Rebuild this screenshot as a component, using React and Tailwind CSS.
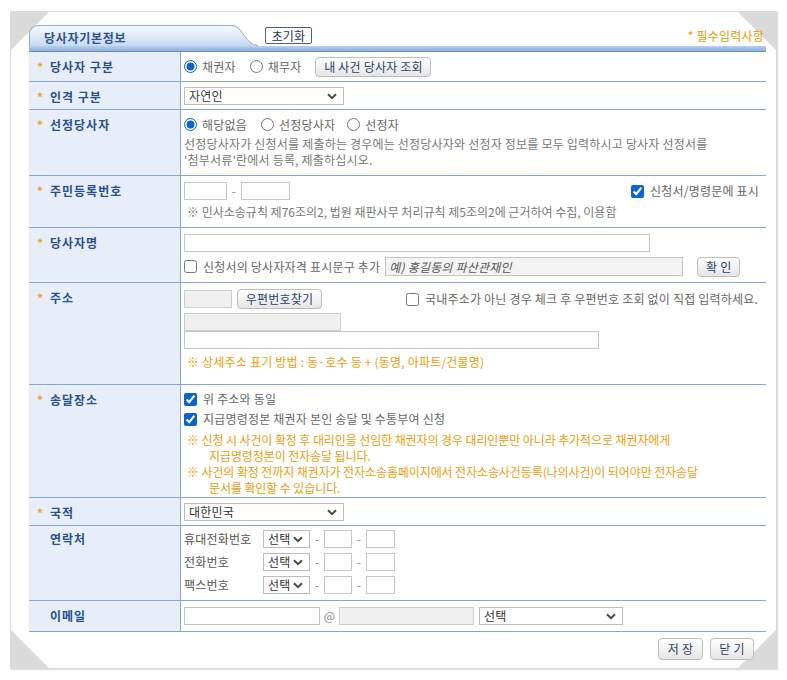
import React from 'react';

const radio = 'm-0 w-[13px] h-[13px] accent-[#0b63d1] shrink-0';
const check = 'm-0 w-[13px] h-[13px] accent-[#0b63d1] shrink-0';
const btn =
  'rounded-[4px] border border-[#bdbdbd] bg-linear-to-b from-white to-[#e6e6e6] text-[12px] text-[#1f3f6f] leading-none shrink-0';
const input = 'block h-[18px] border border-[#c6c6c6] bg-white shrink-0';
const grayInput = 'block h-[18px] border border-[#cccccc] bg-[#f0f0f0] shrink-0';
const note = 'leading-[16px] text-[#ee9c0c] whitespace-nowrap';

const Chevron = () => (
  <svg width="10" height="7" viewBox="0 0 10 7">
    <path d="M1 1.2 L5 5.2 L9 1.2" fill="none" stroke="#4a4a4a" strokeWidth="2" />
  </svg>
);

const Select = ({ value, w }) => (
  <div className={`relative h-[18px] shrink-0 ${w}`}>
    <select className="appearance-none w-full h-full border border-[#bcbcbc] bg-white pl-[4px] text-[12px] text-[#333] leading-[16px] outline-none">
      <option>{value}</option>
    </select>
    <span className="pointer-events-none absolute right-[7px] top-[6px] flex">
      <Chevron />
    </span>
  </div>
);

const Row = ({ label, req = true, h, labelPt = 'pt-[6px]', children }) => (
  <div className={`flex border-b border-[#86a5d0] ${h}`}>
    <div
      className={`w-[152px] shrink-0 bg-[#e8eef9] border-r border-[#86a5d0] pl-[8px] ${labelPt} leading-[18px] text-[12px] font-bold tracking-[1px] text-[#27508f]`}
    >
      <span className="inline-block w-[13px] text-[#eba21c]">{req ? '*' : ''}</span>
      {label}
    </div>
    <div className="flex-1 min-w-0 pl-[3px]">{children}</div>
  </div>
);

const Corner = ({ pos, points }) => (
  <svg className={`absolute ${pos}`} width="40" height="40" viewBox="0 0 40 40">
    <polygon points={points} fill="#dadada" />
  </svg>
);

export default function App() {
  return (
    <div className="w-[787px] h-[680px] bg-white pt-[11px] pl-[10px] font-['Noto_Sans_CJK_KR',sans-serif] text-[12px] tracking-[0.2px] text-[#666]">
      <div className="relative w-[767px] h-[658px] border border-[#d9d9d9] shadow-[1px_1px_1px_rgba(0,0,0,0.12)] bg-white">
        <Corner pos="-top-px -left-px" points="0,0 40,0 0,40" />
        <Corner pos="-top-px -right-px" points="0,0 40,0 40,40" />
        <Corner pos="-bottom-px -left-px" points="0,0 0,40 40,40" />
        <Corner pos="-bottom-px -right-px" points="40,0 40,40 0,40" />

        <div className="relative pl-[18px] pr-[10px] pt-[13px]">
          {/* header */}
          <div className="flex items-start h-[21px]">
            <div className="flex h-[21px]">
              <div className="w-[203px] h-[21px] rounded-tl-[9px] border-l border-t border-[#8caad3] bg-linear-to-b from-[#f6f9fd] to-[#c7d9f0] pl-[14px] pt-[3px] leading-[18px] text-[12px] font-bold tracking-[0.7px] text-[#2b5391]">
                당사자기본정보
              </div>
              <svg width="26" height="21" viewBox="0 0 26 21">
                <defs>
                  <linearGradient id="tabg" x1="0" y1="0" x2="0" y2="1">
                    <stop offset="0" stopColor="#f6f9fd" />
                    <stop offset="1" stopColor="#c7d9f0" />
                  </linearGradient>
                </defs>
                <path d="M0 0 C11 0 13 21 26 21 L0 21 Z" fill="url(#tabg)" />
                <path d="M0 0.5 C11 0.5 13 20.5 26 20.5" fill="none" stroke="#8caad3" />
              </svg>
            </div>
            <button className="ml-[7px] mt-[2px] w-[47px] h-[17px] border border-[#4d5f7c] rounded-[2px] bg-white text-[12px] leading-none text-[#1c3458]">
              초기화
            </button>
            <span className="ml-auto mr-[2px] leading-[21px] text-[#e99a00]">* 필수입력사항</span>
          </div>
          <div className="h-[6px] bg-linear-to-b from-[#b7d0f0] to-[#8eb0dc] border-b border-[#6a8ec2]" />

          {/* rows */}
          <Row label="당사자 구분" h="h-[30px]">
            <div className="flex items-center h-full">
              <input type="radio" name="r1" defaultChecked className={radio} />
              <span className="ml-[5px]">채권자</span>
              <input type="radio" name="r1" className={`${radio} ml-[14px]`} />
              <span className="ml-[5px]">채무자</span>
              <button className={`${btn} ml-[14px] w-[116px] h-[20px]`}>내 사건 당사자 조회</button>
            </div>
          </Row>

          <Row label="인격 구분" h="h-[28px]">
            <div className="flex items-center h-full">
              <Select value="자연인" w="w-[160px]" />
            </div>
          </Row>

          <Row label="선정당사자" h="h-[66px]">
            <div className="pt-[6px]">
              <div className="flex items-center h-[17px]">
                <input type="radio" name="r2" defaultChecked className={radio} />
                <span className="ml-[5px]">해당없음</span>
                <input type="radio" name="r2" className={`${radio} ml-[14px]`} />
                <span className="ml-[5px]">선정당사자</span>
                <input type="radio" name="r2" className={`${radio} ml-[12px]`} />
                <span className="ml-[5px]">선정자</span>
              </div>
              <div className="mt-[3px] leading-[16px] text-[#777] whitespace-nowrap">
                선정당사자가 신청서를 제출하는 경우에는 선정당사자와 선정자 정보를 모두 입력하시고 당사자 선정서를
                <br />
                '첨부서류'란에서 등록, 제출하십시오.
              </div>
            </div>
          </Row>

          <Row label="주민등록번호" h="h-[52px]">
            <div className="pt-[6px] pr-[7px]">
              <div className="flex items-center h-[18px]">
                <input className={`${input} w-[43px]`} />
                <span className="w-[14px] text-center text-[#888]">-</span>
                <input className={`${input} w-[49px]`} />
                <label className="ml-auto flex items-center">
                  <input type="checkbox" defaultChecked className={check} />
                  <span className="ml-[6px]">신청서/명령문에 표시</span>
                </label>
              </div>
              <div className="mt-[4px] pl-[3px] leading-[16px] tracking-normal text-[#777] whitespace-nowrap">
                ※ 민사소송규칙 제76조의2, 법원 재판사무 처리규칙 제5조의2에 근거하여 수집, 이용함
              </div>
            </div>
          </Row>

          <Row label="당사자명" h="h-[55px]">
            <div className="pt-[6px]">
              <input className={`${input} w-[466px]`} />
              <div className="mt-[4px] flex items-center h-[21px]">
                <input type="checkbox" className={check} />
                <span className="ml-[6px] whitespace-nowrap">신청서의 당사자자격 표시문구 추가</span>
                <input
                  className="ml-[5px] block h-[19px] w-[298px] border border-[#c4c4c4] bg-[#f3f3f3] pl-[3px] italic placeholder:text-[#555] placeholder:italic"
                  placeholder="예) 홍길동의 파산관재인"
                />
                <button className={`${btn} ml-[14px] w-[43px] h-[20px]`}>확 인</button>
              </div>
            </div>
          </Row>

          <Row label="주소" h="h-[102px]">
            <div className="pt-[6px]">
              <div className="flex items-center h-[20px]">
                <input className={`${grayInput} w-[48px]`} />
                <button className={`${btn} ml-[5px] w-[85px] h-[20px]`}>우편번호찾기</button>
                <input type="checkbox" className={`${check} ml-[84px]`} />
                <span className="ml-[6px] whitespace-nowrap">
                  국내주소가 아닌 경우 체크 후 우편번호 조회 없이 직접 입력하세요.
                </span>
              </div>
              <input className={`${grayInput} mt-[4px] w-[157px]`} />
              <input className={`${input} w-[415px]`} />
              <div className={`mt-[5px] pl-[3px] ${note}`}>
                ※ 상세주소 표기 방법 : 동·호수 등 + (동명, 아파트/건물명)
              </div>
            </div>
          </Row>

          <Row label="송달장소" h="h-[113px]">
            <div className="pt-[4px]">
              <div className="flex items-center h-[20px]">
                <input type="checkbox" defaultChecked className={check} />
                <span className="ml-[6px]">위 주소와 동일</span>
              </div>
              <div className="flex items-center h-[20px]">
                <input type="checkbox" defaultChecked className={check} />
                <span className="ml-[6px]">지급명령정본 채권자 본인 송달 및 수통부여 신청</span>
              </div>
              <div className={`mt-[3px] tracking-[-0.1px] ${note}`}>
                <div className="pl-[3px]">
                  ※ 신청 시 사건이 확정 후 대리인을 선임한 채권자의 경우 대리인뿐만 아니라 추가적으로 채권자에게
                </div>
                <div className="pl-[25px]">지급명령정본이 전자송달 됩니다.</div>
                <div className="pl-[3px]">
                  ※ 사건의 확정 전까지 채권자가 전자소송홈페이지에서 전자소송사건등록(나의사건)이 되어야만 전자송달
                </div>
                <div className="pl-[25px]">문서를 확인할 수 있습니다.</div>
              </div>
            </div>
          </Row>

          <Row label="국적" h="h-[28px]">
            <div className="flex items-center h-full">
              <Select value="대한민국" w="w-[160px]" />
            </div>
          </Row>

          <Row label="연락처" req={false} h="h-[75px]" labelPt="pt-[4px]">
            <div className="pt-[4px] flex flex-col gap-[5px]">
              {['휴대전화번호', '전화번호', '팩스번호'].map((l) => (
                <div key={l} className="flex items-center h-[18px]">
                  <span className="w-[79px] shrink-0 text-[#555]">{l}</span>
                  <Select value="선택" w="w-[47px]" />
                  <span className="w-[14px] text-center text-[#888]">-</span>
                  <input className={`${input} w-[28px]`} />
                  <span className="w-[14px] text-center text-[#888]">-</span>
                  <input className={`${input} w-[29px]`} />
                </div>
              ))}
            </div>
          </Row>

          <Row label="이메일" req={false} h="h-[31px]">
            <div className="flex items-center h-full">
              <input className={`${input} w-[136px]`} />
              <span className="w-[19px] text-center text-[#888]">@</span>
              <input className={`${grayInput} w-[135px]`} />
              <div className="ml-[5px]">
                <Select value="선택" w="w-[144px]" />
              </div>
            </div>
          </Row>

          <div className="flex justify-end gap-[7px] mt-[6px] pr-[12px]">
            <button className={`${btn} w-[45px] h-[22px]`}>저 장</button>
            <button className={`${btn} w-[44px] h-[22px]`}>닫 기</button>
          </div>
        </div>
      </div>
    </div>
  );
}
